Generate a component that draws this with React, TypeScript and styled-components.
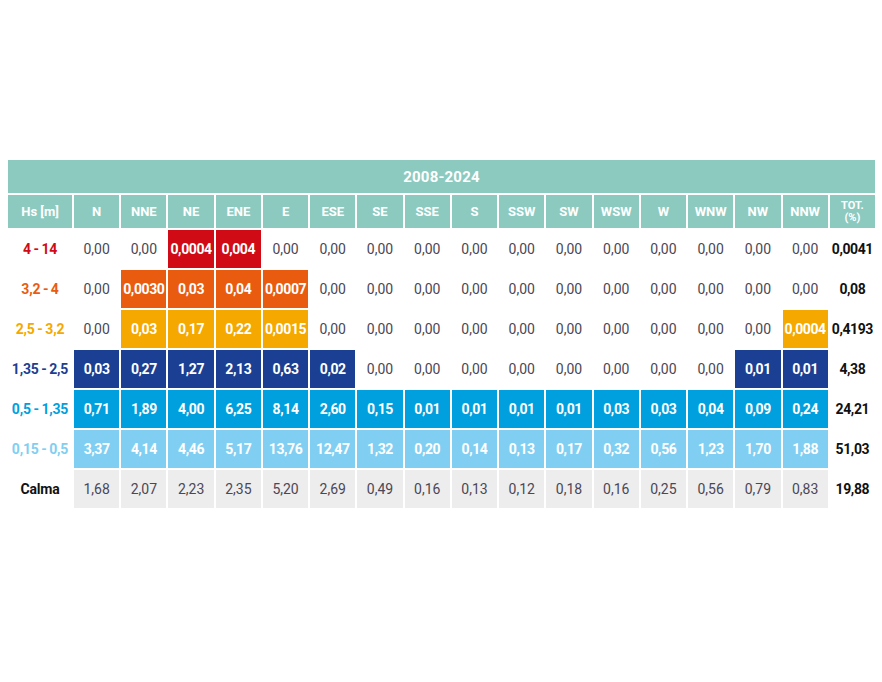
import React from "react";
import styled, { createGlobalStyle } from "styled-components";

const GlobalStyle = createGlobalStyle`
  html, body { margin: 0; padding: 0; background: #ffffff; }
  body { font-family: Roboto, "Open Sans", "Liberation Sans", sans-serif; }
`;

type Tone = "red" | "orange" | "yellow" | "navy" | "blue" | "sky" | "gray" | "none";

const bg: Record<Tone, string> = {
  red: "#d10b16",
  orange: "#e95c10",
  yellow: "#f5a800",
  navy: "#1b3f93",
  blue: "#00a0de",
  sky: "#80cff2",
  gray: "#ededed",
  none: "transparent",
};

const labelColor: Record<string, string> = {
  red: "#d10b16",
  orange: "#e95c10",
  yellow: "#f5a800",
  navy: "#1b3f93",
  blue: "#00a0de",
  sky: "#80cff2",
  gray: "#111111",
};

const Page = styled.div`
  padding: 160px 7px 0 8px;
`;

const Grid = styled.div`
  display: grid;
  grid-template-columns: 64px repeat(17, 1fr);
  grid-template-rows: 33px 33px repeat(7, 38px);
  gap: 2px;
  width: 867px;
`;

const Title = styled.div`
  grid-column: 1 / -1;
  background: #8ccac0;
  color: #ffffff;
  font-weight: 700;
  font-size: 15px;
  display: flex;
  align-items: center;
  justify-content: center;
  letter-spacing: 0.2px;
`;

const Head = styled.div`
  background: #8ccac0;
  color: #ffffff;
  font-weight: 700;
  font-size: 13px;
  display: flex;
  align-items: center;
  justify-content: center;
  text-align: center;
`;

const HeadStack = styled.span`
  display: flex;
  flex-direction: column;
  align-items: center;
  font-size: 11px;
  line-height: 12px;
`;

const Label = styled.div<{ $tone: string }>`
  display: flex;
  align-items: center;
  justify-content: center;
  font-weight: 700;
  font-size: 14px;
  color: ${(p) => labelColor[p.$tone]};
  white-space: nowrap;
  letter-spacing: -0.2px;
`;

const Cell = styled.div<{ $tone: Tone }>`
  display: flex;
  align-items: center;
  justify-content: center;
  background: ${(p) => bg[p.$tone]};
  color: ${(p) => (p.$tone === "none" || p.$tone === "gray" ? "#4b4756" : "#ffffff")};
  font-weight: ${(p) => (p.$tone === "none" || p.$tone === "gray" ? 400 : 700)};
  font-size: 14px;
  letter-spacing: ${(p) => (p.$tone === "none" || p.$tone === "gray" ? "0" : "-0.4px")};
  white-space: nowrap;
`;

const Total = styled.div`
  display: flex;
  align-items: center;
  justify-content: center;
  font-weight: 700;
  font-size: 14px;
  color: #111111;
  letter-spacing: -0.4px;
  white-space: nowrap;
`;

const dirs = ["N", "NNE", "NE", "ENE", "E", "ESE", "SE", "SSE", "S", "SSW", "SW", "WSW", "W", "WNW", "NW", "NNW"];

type Row = { label: string; tone: string; values: string[]; colored: number[]; total: string };

const z = (n: number) => Array(n).fill("0,00");
const all = Array.from({ length: 16 }, (_, i) => i);

const rows: Row[] = [
  {
    label: "4\u2009-\u200914",
    tone: "red",
    values: ["0,00", "0,00", "0,0004", "0,004", ...z(12)],
    colored: [2, 3],
    total: "0,0041",
  },
  {
    label: "3,2\u2009-\u20094",
    tone: "orange",
    values: ["0,00", "0,0030", "0,03", "0,04", "0,0007", ...z(11)],
    colored: [1, 2, 3, 4],
    total: "0,08",
  },
  {
    label: "2,5\u2009-\u20093,2",
    tone: "yellow",
    values: ["0,00", "0,03", "0,17", "0,22", "0,0015", ...z(10), "0,0004"],
    colored: [1, 2, 3, 4, 15],
    total: "0,4193",
  },
  {
    label: "1,35\u2009-\u20092,5",
    tone: "navy",
    values: ["0,03", "0,27", "1,27", "2,13", "0,63", "0,02", ...z(8), "0,01", "0,01"],
    colored: [0, 1, 2, 3, 4, 5, 14, 15],
    total: "4,38",
  },
  {
    label: "0,5\u2009-\u20091,35",
    tone: "blue",
    values: ["0,71", "1,89", "4,00", "6,25", "8,14", "2,60", "0,15", "0,01", "0,01", "0,01", "0,01", "0,03", "0,03", "0,04", "0,09", "0,24"],
    colored: all,
    total: "24,21",
  },
  {
    label: "0,15\u2009-\u20090,5",
    tone: "sky",
    values: ["3,37", "4,14", "4,46", "5,17", "13,76", "12,47", "1,32", "0,20", "0,14", "0,13", "0,17", "0,32", "0,56", "1,23", "1,70", "1,88"],
    colored: all,
    total: "51,03",
  },
  {
    label: "Calma",
    tone: "gray",
    values: ["1,68", "2,07", "2,23", "2,35", "5,20", "2,69", "0,49", "0,16", "0,13", "0,12", "0,18", "0,16", "0,25", "0,56", "0,79", "0,83"],
    colored: all,
    total: "19,88",
  },
];

export default function App() {
  return (
    <>
      <GlobalStyle />
      <Page>
        <Grid>
          <Title>2008-2024</Title>
          <Head>Hs [m]</Head>
          {dirs.map((d) => (
            <Head key={d}>{d}</Head>
          ))}
          <Head>
            <HeadStack>
              <span>TOT.</span>
              <span>(%)</span>
            </HeadStack>
          </Head>
          {rows.map((r) => (
            <React.Fragment key={r.label}>
              <Label $tone={r.tone}>{r.label}</Label>
              {r.values.map((v, i) => (
                <Cell key={i} $tone={r.colored.includes(i) ? (r.tone as Tone) : "none"}>
                  {v}
                </Cell>
              ))}
              <Total>{r.total}</Total>
            </React.Fragment>
          ))}
        </Grid>
      </Page>
    </>
  );
}
